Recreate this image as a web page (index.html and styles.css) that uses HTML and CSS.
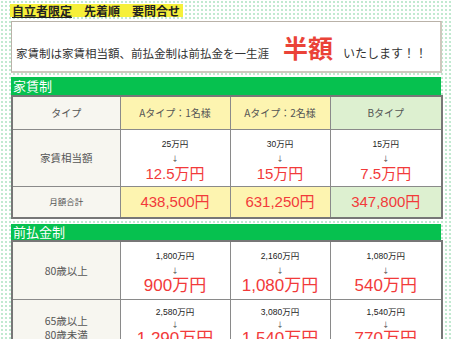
FILE: index.html
```html
<!DOCTYPE html>
<html lang="ja">
<head>
<meta charset="utf-8">
<title>料金</title>
<link rel="stylesheet" href="styles.css">
</head>
<body>
<div class="page">
  <div class="tag"><span class="u">自立者限定</span>　先着順　要問合せ</div>
  <div class="notice">
    <span class="lead">家賃制は家賃相当額、前払金制は前払金を一生涯</span><span class="half">半額</span><span class="tail">いたします！！</span>
  </div>

  <section class="plan">
    <h2 class="bar">家賃制</h2>
    <table class="grid">
      <colgroup><col class="c1"><col class="c2"><col class="c3"><col class="c4"></colgroup>
      <tr class="r-head">
        <td class="label">タイプ</td>
        <td class="ya">Aタイプ：1名様</td>
        <td class="ya">Aタイプ：2名様</td>
        <td class="yb">Bタイプ</td>
      </tr>
      <tr class="r-val">
        <td class="label lg">家賃相当額</td>
        <td class="val"><span class="small">25万円</span><span class="arrow">↓</span><span class="big">12.5万円</span></td>
        <td class="val"><span class="small">30万円</span><span class="arrow">↓</span><span class="big">15万円</span></td>
        <td class="val"><span class="small">15万円</span><span class="arrow">↓</span><span class="big">7.5万円</span></td>
      </tr>
      <tr class="r-sum">
        <td class="label sm">月額合計</td>
        <td class="ya"><span class="big">438,500円</span></td>
        <td class="ya"><span class="big">631,250円</span></td>
        <td class="yb"><span class="big">347,800円</span></td>
      </tr>
    </table>
  </section>

  <section class="plan second">
    <h2 class="bar slim">前払金制</h2>
    <table class="grid">
      <colgroup><col class="c1"><col class="c2"><col class="c3"><col class="c4"></colgroup>
      <tr class="r-pre">
        <td class="label lg">80歳以上</td>
        <td class="val"><span class="small">1,800万円</span><span class="arrow">↓</span><span class="big xl">900万円</span></td>
        <td class="val"><span class="small">2,160万円</span><span class="arrow">↓</span><span class="big xl">1,080万円</span></td>
        <td class="val"><span class="small">1,080万円</span><span class="arrow">↓</span><span class="big xl">540万円</span></td>
      </tr>
      <tr class="r-pre">
        <td class="label lg two">65歳以上<br>80歳未満</td>
        <td class="val tight"><span class="small">2,580万円</span><span class="arrow">↓</span><span class="big xl">1,290万円</span></td>
        <td class="val tight"><span class="small">3,080万円</span><span class="arrow">↓</span><span class="big xl">1,540万円</span></td>
        <td class="val tight"><span class="small">1,540万円</span><span class="arrow">↓</span><span class="big xl">770万円</span></td>
      </tr>
    </table>
  </section>
</div>
</body>
</html>
```

FILE: styles.css
```css
html, body {
  margin: 0;
  padding: 0;
}
body {
  background-color: #ffffff;
  background-image: radial-gradient(circle at 2px 2px, #bfe9cf 0.7px, transparent 1px);
  background-size: 4px 4px;
  font-family: "Noto Sans CJK JP", sans-serif;
  color: #333;
}
.page {
  padding: 4px 0 0 10px;
  width: 434px;
  font-size: 12px;
  line-height: 13px;
}
.tag {
  display: table;
  background: #f6f03a;
  color: #222;
  font-weight: bold;
  font-size: 12px;
  line-height: 13px;
  padding: 0 3px 0 2px;
}
.u {
  text-decoration: underline;
}
.notice {
  margin: 4px 0 0 1px;
  box-sizing: border-box;
  width: 431px;
  height: 52px;
  background: #fff;
  border: 1px solid #b9b2a8;
  border-right: 2px solid #cfc8bf;
  border-bottom: 2px solid #cfc8bf;
  display: flex;
  align-items: baseline;
  padding: 13px 0 0 4px;
}
.lead {
  font-size: 11.5px;
  color: #333;
}
.half {
  font-size: 25px;
  line-height: 25px;
  font-weight: bold;
  color: #ea4338;
  margin-left: 14px;
  margin-right: 10px;
}
.tail {
  font-size: 12px;
  color: #333;
}
.plan {
  margin: 4px 0 0 1px;
  width: 430px;
}
.plan.second {
  margin-top: 5px;
}
.bar {
  margin: 0;
  height: 18px;
  background: #06c14f;
  color: #fff;
  font-size: 13px;
  font-weight: normal;
  line-height: 18px;
  padding-left: 2px;
}
.bar.slim {
  height: 16px;
  line-height: 16px;
}
.grid {
  width: 430px;
  border-collapse: collapse;
  table-layout: fixed;
  border: 2px solid #777;
}
.c1 { width: 108px; }
.c2 { width: 110px; }
.c3 { width: 100px; }
.c4 { width: 112px; }
.grid td {
  border: 1px solid #8a8a8a;
  text-align: center;
  padding: 0;
  vertical-align: middle;
}
.r-head { height: 33px; }
.r-head td {
  font-size: 10px;
  color: #555;
}
.r-val { height: 57px; }
.r-sum { height: 32px; }
.r-pre { height: 58px; }
.label {
  background: #f7f6f0;
  color: #555;
}
.label.lg {
  font-size: 10.5px;
  line-height: 13px;
}
.label.two {
  line-height: 14px;
}
.label.sm {
  font-size: 8.5px;
}
.ya { background: #fdf4b0; }
.yb { background: #ddf0d0; }
.val {
  background: #fff;
}
.grid td.val {
  vertical-align: top;
  padding-top: 7px;
}
.small {
  display: block;
  font-family: "Liberation Sans", "Noto Sans CJK JP", sans-serif;
  font-size: 8.5px;
  line-height: 14px;
  color: #222;
}
.arrow {
  display: block;
  font-size: 7px;
  line-height: 14px;
  color: #444;
}
.big {
  display: block;
  font-family: "Liberation Sans", "Noto Sans CJK JP", sans-serif;
  font-size: 15px;
  line-height: 18px;
  color: #f23a3a;
}
.big.xl {
  font-size: 17px;
}
.grid td.tight {
  padding-top: 6px;
}
.tight .small, .tight .arrow {
  line-height: 12px;
}
```
